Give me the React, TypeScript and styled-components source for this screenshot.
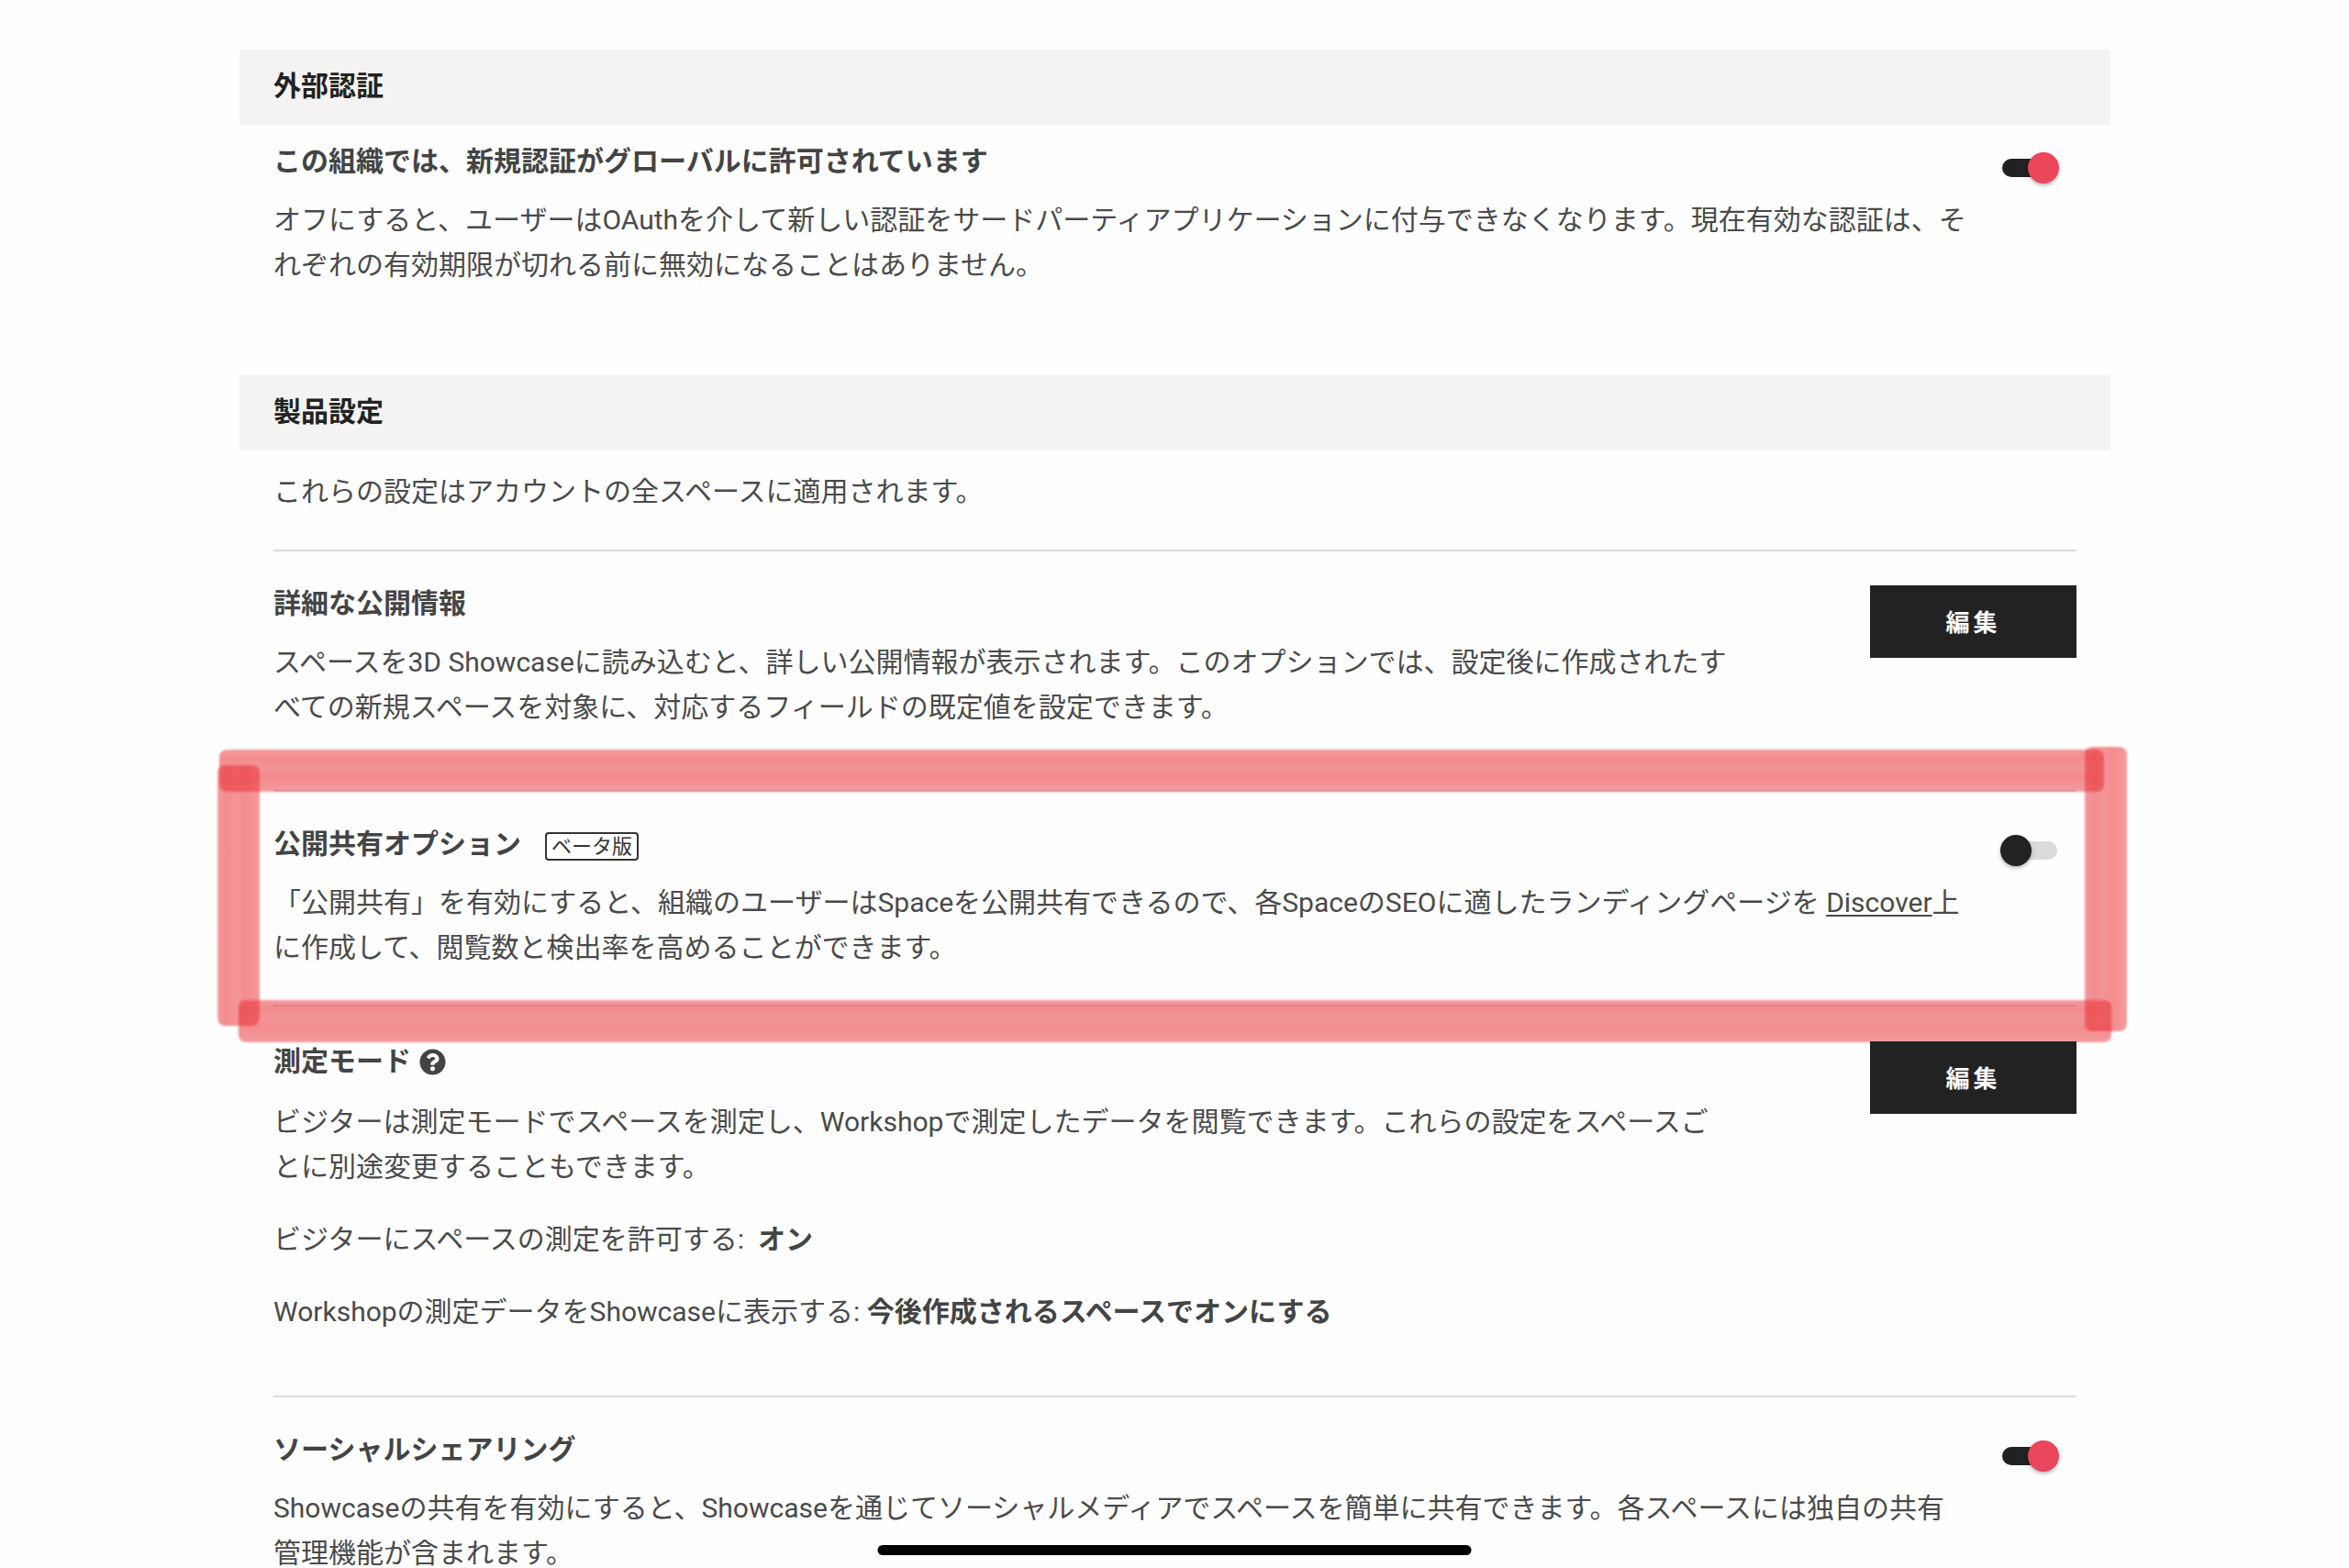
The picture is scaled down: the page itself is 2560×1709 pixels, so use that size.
import React from "react";
import styled, { createGlobalStyle } from "styled-components";
import { FaQuestionCircle } from "react-icons/fa";

const fontStack = `Roboto, "Noto Sans CJK JP", sans-serif`;

const Global = createGlobalStyle`
  * { box-sizing: border-box; }
  body { margin: 0; background: #fefefe; }
  h2, h3, p { margin: 0; }
`;

const Page = styled.main`
  padding: 54px 260px 0 261px;
  height: 100vh;
  overflow: hidden;
  font-family: ${fontStack};
  font-size: 30px;
  line-height: 49px;
  color: #4a4a4a;
`;

const Heading = styled.h2`
  height: 82px;
  padding: 0 37px;
  background: #f4f3f1;
  color: #222;
  font-size: 30px;
  line-height: 80px;
  font-weight: 700;
`;

const Body = styled.div`
  padding: 0 37px;
`;

const Intro = styled.p`
  padding: 20px 0 39px;
  border-bottom: 2px solid #dcdcdc;
`;

const Row = styled.div<{ $top: number; $bottom: number; $line?: boolean }>`
  position: relative;
  display: flex;
  align-items: flex-start;
  padding: ${(p) => p.$top}px 0 ${(p) => p.$bottom}px;
  border-bottom: ${(p) => (p.$line ? "2px solid #dcdcdc" : "0")};
`;

const Copy = styled.div`
  flex: 1;
  min-width: 0;
`;

const Title = styled.h3`
  display: flex;
  align-items: center;
  min-height: 40px;
  margin-bottom: 19px;
  color: #444;
  font-size: 30px;
  line-height: 40px;
  font-weight: 700;
`;

const Detail = styled.p`
  margin-top: 30px;

  strong {
    color: #444;
    font-weight: 700;
  }
`;

const Badge = styled.span`
  margin: 4px 0 0 26px;
  padding: 0 5px;
  border: 2px solid #333;
  border-radius: 4px;
  color: #333;
  font-size: 22px;
  line-height: 27px;
  font-weight: 400;
`;

const Help = styled.button`
  display: flex;
  align-items: center;
  height: 44px;
  margin-left: 9px;
  padding: 0;
  border: 0;
  background: none;
  color: #444;
  font-size: 29px;
`;

const Link = styled.a`
  color: inherit;
  text-decoration: underline;
  text-decoration-thickness: 2px;
  text-underline-offset: 3px;
`;

const Action = styled.div<{ $width: number }>`
  display: flex;
  flex: none;
  justify-content: flex-end;
  width: ${(p) => p.$width}px;
`;

const Edit = styled.button`
  width: 225px;
  height: 79px;
  padding: 0 0 2px;
  border: 0;
  background: #222;
  color: #fff;
  font-family: ${fontStack};
  font-size: 26px;
  font-weight: 700;
  letter-spacing: 4px;
`;

const Switch = styled.input`
  appearance: none;
  position: relative;
  width: 64px;
  height: 34px;
  margin: 10px 19px 0 0;

  &::before {
    content: "";
    position: absolute;
    inset: 7px 2px;
    border-radius: 10px;
    background: #dbdbdb;
  }

  &::after {
    content: "";
    position: absolute;
    top: 0;
    left: 0;
    width: 34px;
    height: 34px;
    border-radius: 50%;
    background: #222;
    box-shadow: 0 2px 4px rgba(0, 0, 0, 0.3);
  }

  &:checked::before {
    background: #222;
  }

  &:checked::after {
    left: 30px;
    background: #ea465c;
  }
`;

const Marker = styled.div`
  position: absolute;
  inset: -49px -55px -41px -61px;
  pointer-events: none;
`;

const streaks = `rgba(232, 40, 46, 0.46), rgba(232, 36, 42, 0.53) 20%, rgba(232, 40, 46, 0.49) 45%, rgba(232, 36, 42, 0.53) 65%, rgba(232, 40, 46, 0.46)`;

const Stroke = styled.span<{ $side: "top" | "right" | "bottom" | "left" }>`
  position: absolute;
  border-radius: 8px;
  background: linear-gradient(
    ${(p) => (p.$side === "left" || p.$side === "right" ? "to right" : "to bottom")},
    ${streaks}
  );
  filter: blur(1px);
  ${(p) =>
    ({
      top: "top: 3px; left: 2px; right: 25px; height: 46px;",
      bottom: "bottom: 0; left: 23px; right: 17px; height: 46px;",
      left: "left: 0; top: 20px; bottom: 18px; width: 46px;",
      right: "right: 0; top: 0; bottom: 12px; width: 46px;",
    })[p.$side]}
`;

const HomeIndicator = styled.div`
  position: fixed;
  bottom: 14px;
  left: 50%;
  width: 647px;
  height: 11px;
  border-radius: 6px;
  background: #000;
  transform: translateX(-50%);
`;

export default function App() {
  return (
    <>
      <Global />
      <Page>
        <Heading>外部認証</Heading>
        <Body>
          <Row $top={20} $bottom={96}>
            <Copy>
              <Title>この組織では、新規認証がグローバルに許可されています</Title>
              <p>オフにすると、ユーザーはOAuthを介して新しい認証をサードパーティアプリケーションに付与できなくなります。現在有効な認証は、それぞれの有効期限が切れる前に無効になることはありません。</p>
            </Copy>
            <Action $width={115}>
              <Switch type="checkbox" role="switch" defaultChecked aria-label="新規認証" />
            </Action>
          </Row>
        </Body>

        <Heading>製品設定</Heading>
        <Body>
          <Intro>これらの設定はアカウントの全スペースに適用されます。</Intro>

          <Row $top={37} $bottom={66} $line>
            <Copy>
              <Title>詳細な公開情報</Title>
              <p>スペースを3D Showcaseに読み込むと、詳しい公開情報が表示されます。このオプションでは、設定後に作成されたすべての新規スペースを対象に、対応するフィールドの既定値を設定できます。</p>
            </Copy>
            <Action $width={377}>
              <Edit type="button">編集</Edit>
            </Action>
          </Row>

          <Row $top={37} $bottom={38} $line>
            <Copy>
              <Title>
                公開共有オプション<Badge>ベータ版</Badge>
              </Title>
              <p>
                「公開共有」を有効にすると、組織のユーザーはSpaceを公開共有できるので、各SpaceのSEOに適したランディングページを <Link href="#discover">Discover</Link>上に作成して、閲覧数と検出率を高めることができます。
              </p>
            </Copy>
            <Action $width={115}>
              <Switch type="checkbox" role="switch" aria-label="公開共有オプション" />
            </Action>
            <Marker aria-hidden="true">
              <Stroke $side="top" />
              <Stroke $side="left" />
              <Stroke $side="right" />
              <Stroke $side="bottom" />
            </Marker>
          </Row>

          <Row $top={38} $bottom={67} $line>
            <Copy>
              <Title>
                測定モード
                <Help type="button" aria-label="測定モードのヘルプ">
                  <FaQuestionCircle />
                </Help>
              </Title>
              <p>ビジターは測定モードでスペースを測定し、Workshopで測定したデータを閲覧できます。これらの設定をスペースごとに別途変更することもできます。</p>
              <Detail>
                ビジターにスペースの測定を許可する:{"\u00a0 "}
                <strong>オン</strong>
              </Detail>
              <Detail>
                Workshopの測定データをShowcaseに表示する: <strong>今後作成されるスペースでオンにする</strong>
              </Detail>
            </Copy>
            <Action $width={377}>
              <Edit type="button">編集</Edit>
            </Action>
          </Row>

          <Row $top={37} $bottom={66}>
            <Copy>
              <Title>ソーシャルシェアリング</Title>
              <p>Showcaseの共有を有効にすると、Showcaseを通じてソーシャルメディアでスペースを簡単に共有できます。各スペースには独自の共有管理機能が含まれます。</p>
            </Copy>
            <Action $width={115}>
              <Switch type="checkbox" role="switch" defaultChecked aria-label="ソーシャルシェアリング" />
            </Action>
          </Row>
        </Body>
      </Page>
      <HomeIndicator />
    </>
  );
}
